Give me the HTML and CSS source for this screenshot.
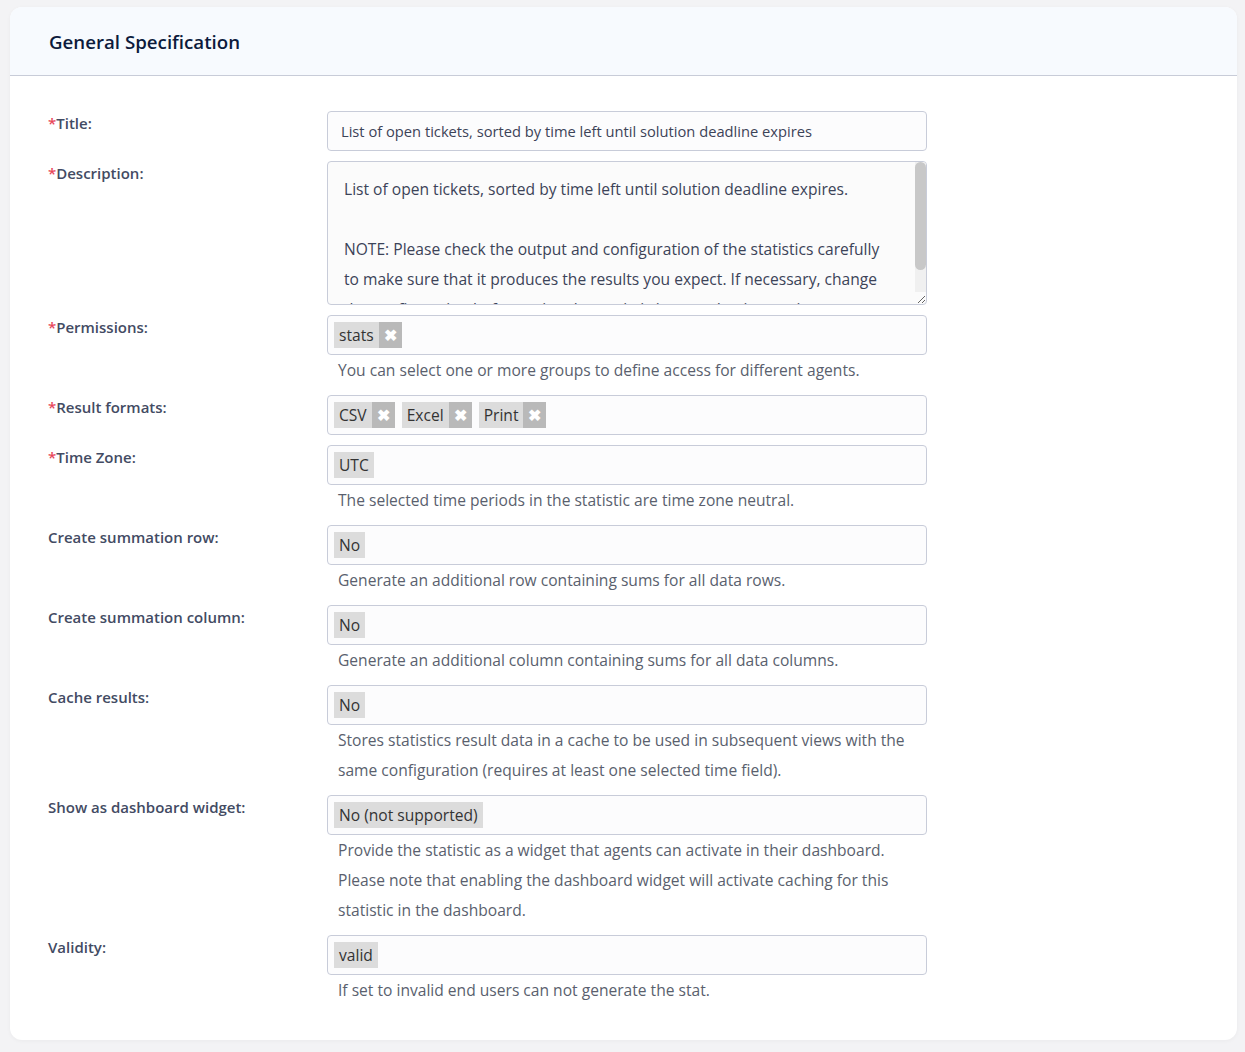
FILE: index.html
```html
<!DOCTYPE html>
<html lang="en">
<head>
<meta charset="utf-8">
<title>General Specification</title>
<link rel="stylesheet" href="styles.css">
</head>
<body>
<div class="card">
  <div class="card-header"><h2>General Specification</h2></div>
  <div class="card-body">
    <div class="row">
      <label class="lbl"><span class="req">*</span>Title:</label>
      <div class="field">
        <div class="input text">List of open tickets, sorted by time left until solution deadline expires</div>
      </div>
    </div>
    <div class="row">
      <label class="lbl"><span class="req">*</span>Description:</label>
      <div class="field">
        <div class="area-wrap">
          <textarea class="area" readonly>List of open tickets, sorted by time left until solution deadline expires.

NOTE: Please check the output and configuration of the statistics carefully to make sure that it produces the results you expect. If necessary, change the configuration before using the statistic in a production environment.</textarea>
          <div class="sb"><div class="thumb"></div></div>
        </div>
      </div>
    </div>
    <div class="row">
      <label class="lbl"><span class="req">*</span>Permissions:</label>
      <div class="field">
        <div class="input tags"><span class="tag">stats<span class="x">&#10006;</span></span></div>
        <p class="help">You can select one or more groups to define access for different agents.</p>
      </div>
    </div>
    <div class="row">
      <label class="lbl"><span class="req">*</span>Result formats:</label>
      <div class="field">
        <div class="input tags"><span class="tag">CSV<span class="x">&#10006;</span></span><span class="tag">Excel<span class="x">&#10006;</span></span><span class="tag">Print<span class="x">&#10006;</span></span></div>
      </div>
    </div>
    <div class="row">
      <label class="lbl"><span class="req">*</span>Time Zone:</label>
      <div class="field">
        <div class="input tags"><span class="tag single">UTC</span></div>
        <p class="help">The selected time periods in the statistic are time zone neutral.</p>
      </div>
    </div>
    <div class="row">
      <label class="lbl">Create summation row:</label>
      <div class="field">
        <div class="input tags"><span class="tag single">No</span></div>
        <p class="help">Generate an additional row containing sums for all data rows.</p>
      </div>
    </div>
    <div class="row">
      <label class="lbl">Create summation column:</label>
      <div class="field">
        <div class="input tags"><span class="tag single">No</span></div>
        <p class="help">Generate an additional column containing sums for all data columns.</p>
      </div>
    </div>
    <div class="row">
      <label class="lbl">Cache results:</label>
      <div class="field">
        <div class="input tags"><span class="tag single">No</span></div>
        <p class="help">Stores statistics result data in a cache to be used in subsequent views with the same configuration (requires at least one selected time field).</p>
      </div>
    </div>
    <div class="row">
      <label class="lbl">Show as dashboard widget:</label>
      <div class="field">
        <div class="input tags"><span class="tag single">No (not supported)</span></div>
        <p class="help">Provide the statistic as a widget that agents can activate in their dashboard. Please note that enabling the dashboard widget will activate caching for this statistic in the dashboard.</p>
      </div>
    </div>
    <div class="row">
      <label class="lbl">Validity:</label>
      <div class="field">
        <div class="input tags"><span class="tag single">valid</span></div>
        <p class="help">If set to invalid end users can not generate the stat.</p>
      </div>
    </div>
  </div>
</div>
</body>
</html>
```
FILE: styles.css
```css
html, body {
  margin: 0;
  padding: 0;
}
body {
  background: #f3f3f5;
  font-family: "Open Sans", "Noto Sans", sans-serif;
  padding: 7px 8px 12px 10px;
}
.card {
  background: #fff;
  border-radius: 12px;
  box-shadow: 0 1px 4px rgba(0, 0, 0, 0.04);
  overflow: hidden;
}
.card-header {
  background: #f7fafe;
  border-bottom: 1px solid #c8ccd8;
  box-sizing: border-box;
  height: 69px;
  display: flex;
  align-items: center;
  padding: 0 0 0 39px;
}
.card-header h2 {
  margin: 0;
  font-size: 18.7px;
  font-weight: 600;
  color: #0c1a3c;
}
.card-body {
  padding: 35px 0 25px 38px;
}
.row {
  display: flex;
  margin-bottom: 10px;
}
.lbl {
  width: 279px;
  flex: none;
  font-size: 15px;
  font-weight: 600;
  color: #434b63;
  line-height: 24px;
}
.req {
  color: #e8465a;
}
.field {
  width: 600px;
}
.input {
  box-sizing: border-box;
  height: 40px;
  border: 1px solid #c8ccd9;
  border-radius: 4px;
  background: #fcfcfd;
  display: flex;
  align-items: center;
}
.input.text {
  padding-left: 13px;
  font-size: 14.7px;
  color: #3c4358;
}
.input.tags {
  padding-left: 6px;
  gap: 7px;
}
.tag {
  display: inline-flex;
  align-items: center;
  height: 26px;
  background: #dcdcdc;
  color: #333;
  font-size: 15.6px;
  padding-left: 5px;
}
.tag.single {
  padding-right: 5px;
}
.tag .x {
  display: inline-flex;
  align-items: center;
  justify-content: center;
  width: 23px;
  height: 26px;
  margin-left: 5px;
  background: #b9b9b9;
  color: #fff;
  font-size: 16px;
  font-weight: 700;
}
.area-wrap {
  position: relative;
}
.area {
  display: block;
  box-sizing: border-box;
  width: 600px;
  height: 144px;
  border: 1px solid #c8ccd9;
  border-radius: 4px;
  background: #fbfbfb;
  padding: 12px 30px 0 16px;
  font-family: inherit;
  font-size: 15.6px;
  line-height: 30px;
  color: #3c4358;
  resize: vertical;
  overflow: hidden;
  margin: 0;
}
.sb {
  position: absolute;
  top: 1px;
  right: 1px;
  bottom: 13px;
  width: 11px;
  background: #f0f0f0;
  border-top-right-radius: 3px;
}
.thumb {
  height: 108px;
  background: #c8c8c8;
  border-radius: 6px;
}
.help {
  margin: 0;
  padding-left: 11px;
  font-size: 15.6px;
  line-height: 30px;
  color: #5a5f6e;
}
```
